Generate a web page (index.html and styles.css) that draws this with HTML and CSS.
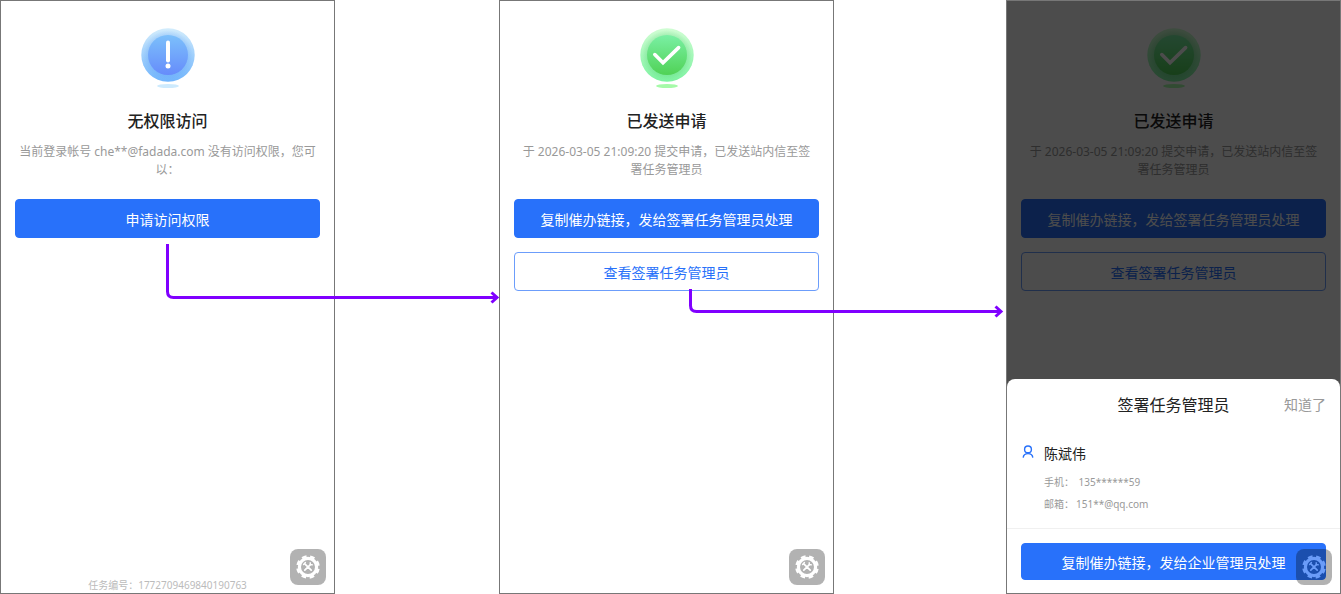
FILE: index.html
```html
<!DOCTYPE html>
<html lang="zh-CN">

<head>
    <meta charset="UTF-8">
    <meta name="viewport" content="width=device-width, initial-scale=1.0">
    <title>无权限访问</title>
    <link rel="stylesheet" href="styles.css">
</head>

<body>
    <svg class="defs" width="0" height="0" aria-hidden="true">
        <defs>
            <linearGradient id="blue-ring" x1="0" y1="0" x2="0" y2="1">
                <stop offset="0" stop-color="#d2ecfc" />
                <stop offset="1" stop-color="#70b4fc" />
            </linearGradient>
            <linearGradient id="blue-disc" x1="0" y1="0" x2="0" y2="1">
                <stop offset="0" stop-color="#7cc0fb" />
                <stop offset="1" stop-color="#668cfb" />
            </linearGradient>
            <linearGradient id="green-ring" x1="0" y1="0" x2="0" y2="1">
                <stop offset="0" stop-color="#d0fdd3" />
                <stop offset="1" stop-color="#7cf2a0" />
            </linearGradient>
            <linearGradient id="green-disc" x1="0" y1="0" x2="0" y2="1">
                <stop offset="0" stop-color="#7af0a4" />
                <stop offset="1" stop-color="#50d256" />
            </linearGradient>
            <radialGradient id="blue-glow">
                <stop offset="0.75" stop-color="#5a9cf5" stop-opacity="0.3" />
                <stop offset="1" stop-color="#5a9cf5" stop-opacity="0" />
            </radialGradient>
            <radialGradient id="green-glow">
                <stop offset="0.75" stop-color="#4cc86a" stop-opacity="0.3" />
                <stop offset="1" stop-color="#4cc86a" stop-opacity="0" />
            </radialGradient>
        </defs>
        <symbol id="icon-sent" viewBox="0 0 54 62">
            <circle cx="27" cy="27" r="26.7" fill="url(#green-ring)" />
            <circle cx="27" cy="27" r="25" fill="url(#green-glow)" />
            <circle cx="27" cy="27" r="20" fill="url(#green-disc)" />
            <path d="M14.8 26.6l8.200 8.200L38.600 19.600" fill="none" stroke="#fff" stroke-width="3.6" stroke-linecap="round" />
            <ellipse cx="27" cy="58" rx="11" ry="2" fill="#a5faa8" />
        </symbol>
        <symbol id="icon-gear" viewBox="0 0 24 24">
            <g fill="none" stroke="currentColor">
                <circle cx="12" cy="12" r="8.6" stroke-width="3.2" />
                <circle cx="12" cy="12" r="10.400" stroke-width="2.8" stroke-dasharray="4.600 3.568" stroke-dashoffset="-1.8" />
                <path d="M8.800 8.800l6.400 6.400M8.800 15.200l5.600-5.600" stroke-width="1.7" stroke-linecap="round" />
                <path d="M7.600 9.400l1.800-1.800M14.200 7.800l.2 1.800 1.800.2" stroke-width="1.4" stroke-linecap="round" />
            </g>
        </symbol>
    </svg>

    <main class="board">
        <section class="phone">
            <svg class="status-icon" viewBox="0 0 54 62" aria-hidden="true">
                <circle cx="27" cy="27" r="26.7" fill="url(#blue-ring)" />
                <circle cx="27" cy="27" r="25" fill="url(#blue-glow)" />
                <circle cx="27" cy="27" r="20" fill="url(#blue-disc)" />
                <path d="M27 14.4v18.2" stroke="#fff" stroke-width="4" stroke-linecap="round" />
                <circle cx="27" cy="38" r="2.5" fill="#fff" />
                <ellipse cx="27" cy="58" rx="11" ry="2" fill="#cdeafd" />
            </svg>
            <h1 class="title">无权限访问</h1>
            <p class="desc">当前登录帐号 che**@fadada.com 没有访问权限，您可以：</p>
            <div class="actions">
                <button class="btn btn-primary" type="button">申请访问权限</button>
            </div>
            <p class="task-no">任务编号：1772709469840190763</p>
            <button class="tool" type="button" aria-label="设置"><svg><use href="#icon-gear" /></svg></button>
        </section>

        <section class="phone">
            <svg class="status-icon" aria-hidden="true"><use href="#icon-sent" /></svg>
            <h1 class="title">已发送申请</h1>
            <p class="desc">于 2026-03-05 21:09:20 提交申请，已发送站内信至签署任务管理员</p>
            <div class="actions">
                <button class="btn btn-primary" type="button">复制催办链接，发给签署任务管理员处理</button>
                <button class="btn btn-plain" type="button">查看签署任务管理员</button>
            </div>
            <button class="tool" type="button" aria-label="设置"><svg><use href="#icon-gear" /></svg></button>
        </section>

        <section class="phone">
            <svg class="status-icon" aria-hidden="true"><use href="#icon-sent" /></svg>
            <h1 class="title">已发送申请</h1>
            <p class="desc">于 2026-03-05 21:09:20 提交申请，已发送站内信至签署任务管理员</p>
            <div class="actions">
                <button class="btn btn-primary" type="button">复制催办链接，发给签署任务管理员处理</button>
                <button class="btn btn-plain" type="button">查看签署任务管理员</button>
            </div>

            <div class="mask">
                <div class="sheet">
                    <header class="sheet-head">
                        <h2 class="sheet-title">签署任务管理员</h2>
                        <button class="sheet-close" type="button">知道了</button>
                    </header>
                    <div class="person">
                        <svg class="person-icon" viewBox="0 0 12 14" aria-hidden="true">
                            <g fill="none" stroke="#2871fa" stroke-width="1.4">
                                <circle cx="6" cy="4.4" r="3.4" />
                                <path d="M1.2 12.6c.2-2.4 2-4 4.8-4s4.6 1.6 4.8 4" />
                            </g>
                        </svg>
                        <div>
                            <p class="person-name">陈斌伟</p>
                            <p class="person-row"><span>手机：</span><span>&nbsp;135******59</span></p>
                            <p class="person-row"><span>邮箱：</span><span>151**@qq.com</span></p>
                        </div>
                    </div>
                    <footer class="sheet-foot">
                        <button class="btn btn-primary" type="button">复制催办链接，发给企业管理员处理</button>
                    </footer>
                </div>
            </div>
            <button class="tool tool-over" type="button" aria-label="设置"><svg><use href="#icon-gear" /></svg></button>
        </section>

        <svg class="arrows" viewBox="0 0 1341 594" aria-hidden="true">
            <path d="M167.5 244V291.5q0 6 6 6H497M491.5 292.5l5.5 5-5.5 5" />
            <path d="M690.5 289V305.5q0 6 6 6H1001M995.5 306.5l5.5 5-5.5 5" />
        </svg>
    </main>
</body>

</html>
```

FILE: styles.css
```css
* {
    box-sizing: border-box;
}

body {
    margin: 0;
    background-color: #ffffff;
    font-family: "Noto Sans", "Noto Sans CJK SC", sans-serif;
    font-size: 14px;
    color: #222222;
}

h1,
h2,
p {
    margin: 0;
}

button {
    font-family: inherit;
    cursor: pointer;
}

.defs {
    position: absolute;
}

/* three screens with room for the arrows between them */
.board {
    position: relative;
    display: grid;
    grid-template-columns: 335fr 164fr 335fr 172fr 335fr;
    min-height: 100vh;
}

.phone {
    position: relative;
    display: flex;
    flex-direction: column;
    padding: 27px 14px 0;
    border: 1px solid #777777;
}

.phone:nth-child(2) {
    grid-column: 3;
}

.phone:nth-child(3) {
    grid-column: 5;
}

.status-icon {
    width: 54px;
    height: 62px;
    align-self: center;
}

.title {
    margin-top: 19px;
    line-height: 24px;
    font-size: 16px;
    font-weight: 500;
    text-align: center;
}

.desc {
    margin-top: 10px;
    padding: 0 4px;
    line-height: 18px;
    font-size: 12px;
    color: #999999;
    text-align: center;
}

.actions {
    display: grid;
    gap: 14px;
    margin-top: 20px;
}

.btn {
    width: 100%;
    height: 39px;
    padding: 0;
    border: 1px solid #2871fa;
    border-radius: 4px;
    font-size: 14px;
}

.btn-primary {
    background-color: #2871fa;
    color: #ffffff;
}

.btn-plain {
    border-color: #6c9dfb;
    background-color: #ffffff;
    color: #2871fa;
}

.task-no {
    margin-top: auto;
    line-height: 16px;
    font-size: 10px;
    color: #bbbbbb;
    text-align: center;
}

/* floating tool button */
.tool {
    position: absolute;
    right: 8px;
    bottom: 8px;
    display: flex;
    align-items: center;
    justify-content: center;
    width: 36px;
    height: 36px;
    padding: 0;
    border: 0;
    border-radius: 8px;
    background-color: rgba(0, 0, 0, 0.3);
    color: #ffffff;
}

.tool svg {
    width: 24px;
    height: 24px;
}

.tool-over {
    color: #6a9cf8;
}

.mask {
    position: absolute;
    inset: 0;
    display: flex;
    align-items: flex-end;
    background-color: rgba(0, 0, 0, 0.7);
}

.sheet {
    width: 100%;
    border-radius: 8px 8px 0 0;
    background-color: #ffffff;
}

.sheet-head {
    display: grid;
    grid-template-columns: 1fr auto 1fr;
    align-items: center;
    height: 49px;
    padding: 0 14px;
}

.sheet-title {
    grid-column: 2;
    font-size: 16px;
    font-weight: 400;
}

.sheet-close {
    justify-self: end;
    padding: 0;
    border: 0;
    background: none;
    font-size: 14px;
    color: #999999;
}

.person {
    display: flex;
    gap: 10px;
    padding: 15px 15px 13px;
}

.person-icon {
    width: 12px;
    height: 14px;
    margin-top: 2px;
}

.person-name {
    margin-bottom: 6px;
    line-height: 22px;
}

.person-row {
    display: flex;
    gap: 2px;
    line-height: 22px;
    font-size: 10px;
    color: #999999;
}

.sheet-foot {
    padding: 14px 14px 13px;
    border-top: 1px solid #f0f0f0;
}

.sheet-foot .btn {
    height: 37px;
}

.arrows {
    position: absolute;
    top: 0;
    left: 0;
    width: 100%;
    fill: none;
    stroke: #8000ff;
    stroke-width: 3;
    pointer-events: none;
}
```
